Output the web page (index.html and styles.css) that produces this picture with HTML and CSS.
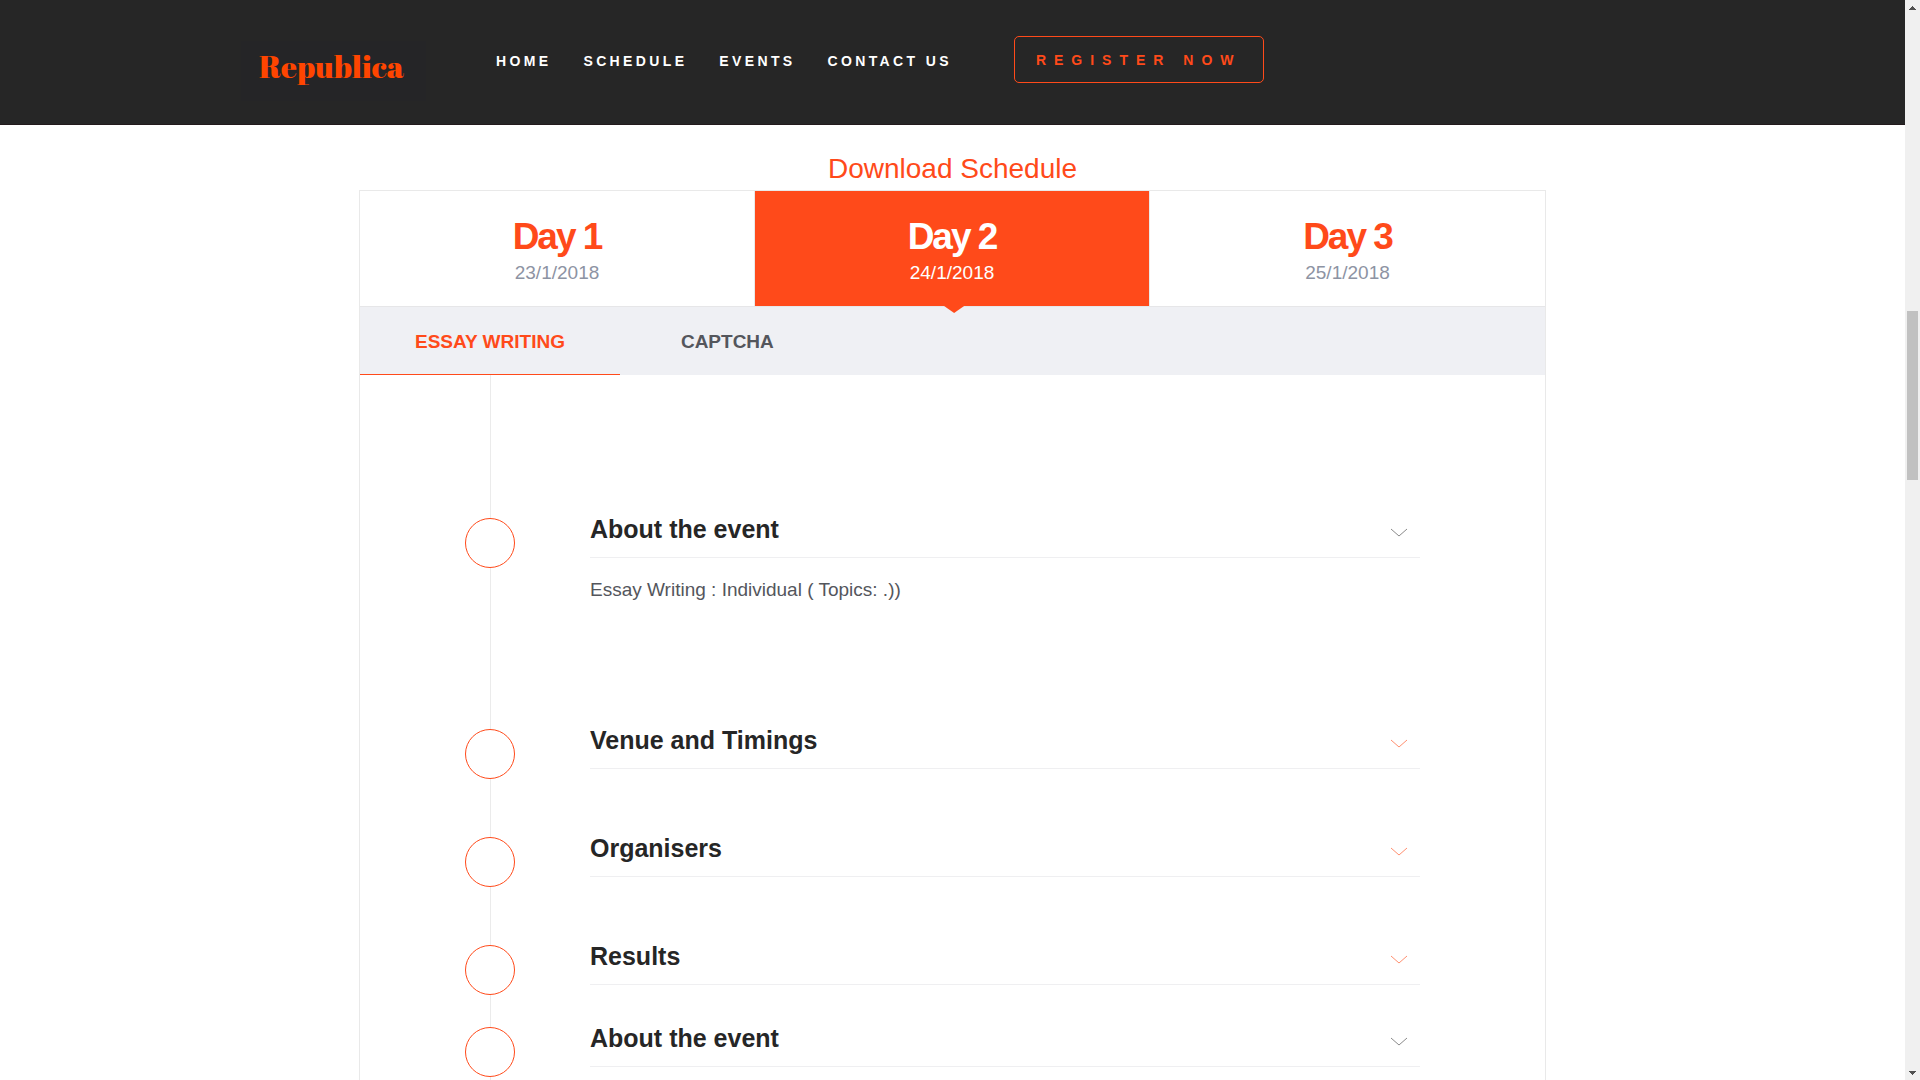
FILE: index.html
```html
<!DOCTYPE html>
<html lang="en">
<head>
<meta charset="utf-8">
<meta name="viewport" content="width=device-width, initial-scale=1">
<title>Republica Schedule</title>
<link rel="stylesheet" href="styles.css">
</head>
<body>
<div class="window">
  <div class="page">
    <header class="site-header">
      <a class="logo" href="#home">Republica</a>
      <nav class="main-nav">
        <a href="#home">HOME</a>
        <a href="#schedule">SCHEDULE</a>
        <a href="#events">EVENTS</a>
        <a href="#contact">CONTACT US</a>
      </nav>
      <a class="register" href="#register">REGISTER NOW</a>
    </header>

    <main class="schedule">
      <a class="download" href="#download">Download Schedule</a>
      <section class="board">
        <div class="days">
          <button class="day" type="button"><strong>Day 1</strong><span>23/1/2018</span></button>
          <button class="day active" type="button"><strong>Day 2</strong><span>24/1/2018</span></button>
          <button class="day" type="button"><strong>Day 3</strong><span>25/1/2018</span></button>
        </div>
        <div class="tracks">
          <button class="track active" type="button">ESSAY WRITING</button>
          <button class="track" type="button">CAPTCHA</button>
        </div>
        <div class="timeline">
          <div class="event">
            <article class="item open">
              <span class="dot"></span>
              <div class="content">
                <button class="toggle" type="button">About the event
                  <svg class="chevron" viewBox="0 0 18 10" aria-hidden="true"><path d="M1 1l8 7 8-7"/></svg></button>
                <p class="text">Essay Writing : Individual ( Topics: .))</p>
              </div>
            </article>
            <article class="item">
              <span class="dot"></span>
              <div class="content">
                <button class="toggle" type="button">Venue and Timings
                  <svg class="chevron" viewBox="0 0 18 10" aria-hidden="true"><path d="M1 1l8 7 8-7"/></svg></button>
              </div>
            </article>
            <article class="item">
              <span class="dot"></span>
              <div class="content">
                <button class="toggle" type="button">Organisers
                  <svg class="chevron" viewBox="0 0 18 10" aria-hidden="true"><path d="M1 1l8 7 8-7"/></svg></button>
              </div>
            </article>
            <article class="item">
              <span class="dot"></span>
              <div class="content">
                <button class="toggle" type="button">Results
                  <svg class="chevron" viewBox="0 0 18 10" aria-hidden="true"><path d="M1 1l8 7 8-7"/></svg></button>
              </div>
            </article>
          </div>
          <div class="event">
            <article class="item open">
              <span class="dot"></span>
              <div class="content">
                <button class="toggle" type="button">About the event
                  <svg class="chevron" viewBox="0 0 18 10" aria-hidden="true"><path d="M1 1l8 7 8-7"/></svg></button>
              </div>
            </article>
          </div>
        </div>
      </section>
    </main>
  </div>
  <div class="scrollbar" aria-hidden="true">
    <svg class="arrow" viewBox="0 0 15 15" shape-rendering="crispEdges"><path d="M4 10h7L8 6H7z"/></svg>
    <div class="rail"><div class="thumb"></div></div>
    <svg class="arrow" viewBox="0 0 15 15" shape-rendering="crispEdges"><path d="M4 6h7L8 10H7z"/></svg>
  </div>
</div>
</body>
</html>
```
FILE: styles.css
```css
* {
  box-sizing: border-box;
}

body {
  margin: 0;
  background: #fff;
  color: #54565c;
  font: 19px/28px "Liberation Sans", Arial, sans-serif;
}

a {
  text-decoration: none;
}

button {
  margin: 0;
  padding: 0;
  border: 0;
  background: none;
  color: inherit;
  font: inherit;
  cursor: pointer;
}

.window {
  display: flex;
  height: 100vh;
}

.page {
  flex: 1;
  overflow: hidden;
}

/* Header */
.site-header {
  display: flex;
  align-items: flex-start;
  height: 125px;
  padding: 36px 24px 0 241px;
  border-bottom: 1px solid #231a1c;
  background: #262626;
}

.logo {
  width: 185px;
  height: 60px;
  margin-top: 5px;
  padding-left: 18px;
  background: #252527;
  color: #ff4500;
  font: 31px/50px "Abril Fatface", "Liberation Serif", serif;
}

.main-nav {
  display: flex;
  gap: 32px;
  margin-left: 70px;
  font-size: 14px;
  font-weight: bold;
  line-height: 50px;
  letter-spacing: 0.24em;
}

.main-nav a {
  color: #fff;
}

.register {
  margin-left: 62px;
  padding: 1px 21px 0;
  border: 1px solid #ff4a1a;
  border-radius: 5px;
  color: #ff4a1a;
  font-size: 14px;
  font-weight: bold;
  line-height: 44px;
  letter-spacing: 8px;
  white-space: nowrap;
}

/* Schedule board */
.schedule {
  display: flex;
  flex-direction: column;
  align-items: center;
  padding: 24px 16px 0;
}

.download {
  padding-bottom: 2px;
  color: #ff4a1a;
  font-size: 28px;
  line-height: 39px;
}

.board {
  width: 100%;
  max-width: 1187px;
  border: 1px solid #e9e9e9;
}

.days {
  display: grid;
  grid-template-columns: repeat(3, 1fr);
  border-bottom: 1px solid #e6e6e8;
}

.day {
  position: relative;
  display: flex;
  flex-direction: column;
  align-items: center;
  height: 115px;
  padding-top: 24px;
  border-right: 1px solid #e9e9e9;
  color: #8d93a3;
}

.day:last-child {
  border-right: 0;
}

.day strong {
  color: #ff4a1a;
  font-size: 37px;
  line-height: 44px;
  letter-spacing: -2px;
}

.day.active,
.day.active strong {
  color: #fff;
}

.day.active {
  background: #ff4a1a;
}

.day.active::after {
  content: "";
  position: absolute;
  top: 100%;
  left: 48%;
  width: 20px;
  height: 7px;
  background: #ff4a1a;
  clip-path: polygon(0 0, 100% 0, 50% 100%);
}

.tracks {
  display: flex;
  gap: 6px;
  background: #eff0f4;
}

.track {
  height: 68px;
  padding: 2px 55px 0;
  border-bottom: 1px solid transparent;
  font-weight: bold;
}

.track.active {
  border-color: #ff4a1a;
  color: #ff4a1a;
}

/* Timeline */
.timeline {
  position: relative;
  padding: 132px 125px 60px 105px;
}

.timeline::before {
  content: "";
  position: absolute;
  top: 0;
  bottom: 0;
  left: 130px;
  width: 1px;
  background: #ebebeb;
}

.item {
  display: grid;
  grid-template-columns: 50px 1fr;
  column-gap: 75px;
  padding-bottom: 47px;
}

.item:last-child {
  padding-bottom: 21px;
}

.dot {
  position: relative;
  height: 50px;
  margin-top: 11px;
  border: 1px solid #ff4a1a;
  border-radius: 50%;
  background: #fff;
}

.toggle {
  display: flex;
  justify-content: space-between;
  width: 100%;
  height: 51px;
  padding-right: 12px;
  border-bottom: 1px solid #efeff1;
  color: #262626;
  font-size: 25px;
  font-weight: bold;
  line-height: 44px;
}

.chevron {
  width: 18px;
  height: 10px;
  margin-top: 21px;
  fill: none;
  stroke: #ff8f70;
}

.open .chevron {
  stroke: #8a8a8a;
}

.text {
  height: 95px;
  margin: 18px 0 0;
}

/* Scrollbar */
.scrollbar {
  display: flex;
  flex-direction: column;
  width: 15px;
  background: #f0f0f0;
}

.arrow {
  height: 15px;
  fill: #505050;
}

.rail {
  flex: 1;
  padding: 0 2px;
}

.thumb {
  height: 169px;
  margin-top: 296px;
  background: #c1c1c1;
}
```
